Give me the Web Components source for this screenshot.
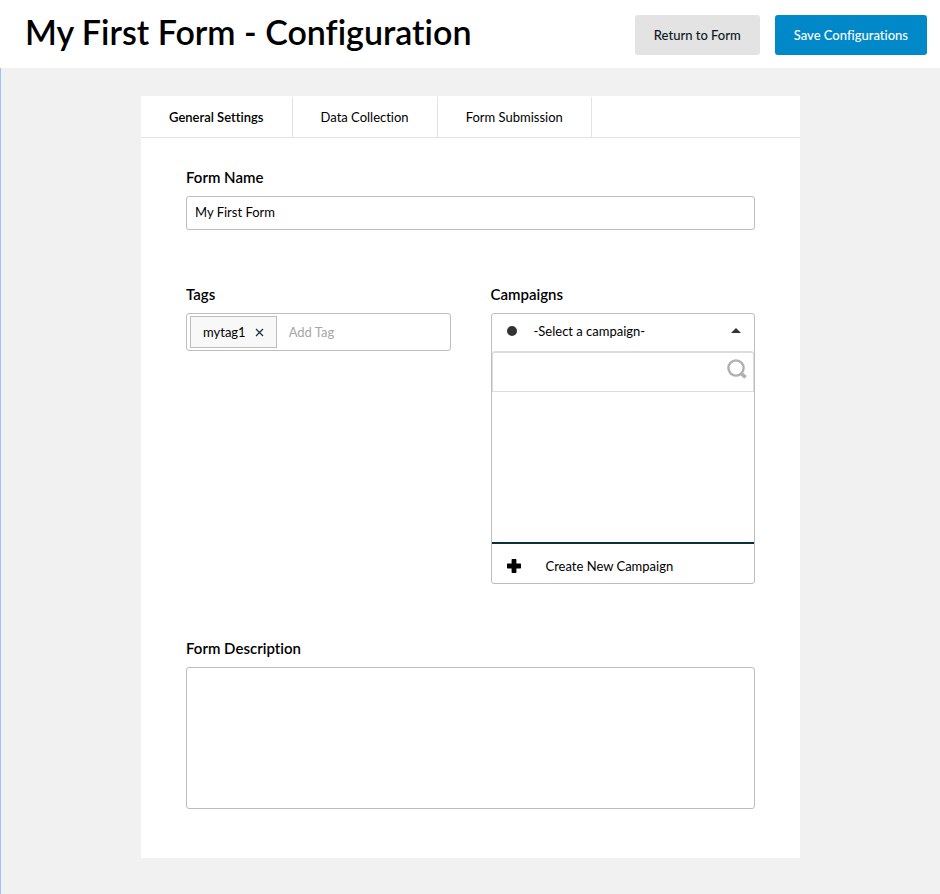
<!DOCTYPE html>
<html lang="en">
<head>
<meta charset="utf-8">
<meta name="viewport" content="width=device-width, initial-scale=1">
<title>My First Form - Configuration</title>
<style>
  html, body { margin: 0; min-height: 100vh; }
  body {
    display: flex;
    flex-direction: column;
    background: #fff;
    color: #000;
    font: 13px/20px Lato, "Open Sans", sans-serif;
    font-variant-ligatures: none;
    --line: #bdbdbd;
    --soft-line: #e3e3e3;
  }
  config-body { flex: 1; }
</style>
</head>
<body>
<config-header heading="My First Form - Configuration">
  <action-button>Return to Form</action-button>
  <action-button primary>Save Configurations</action-button>
</config-header>
<config-body>
  <config-card>
    <tab-bar slot="tabs">
      <tab-item selected>General Settings</tab-item>
      <tab-item>Data Collection</tab-item>
      <tab-item>Form Submission</tab-item>
    </tab-bar>
    <text-field label="Form Name" value="My First Form"></text-field>
    <field-row>
      <tag-field label="Tags" tag="mytag1" placeholder="Add Tag"></tag-field>
      <campaign-picker label="Campaigns"></campaign-picker>
    </field-row>
    <text-area label="Form Description"></text-area>
  </config-card>
</config-body>

<script>
const BASE = `
  *, *::before, *::after { box-sizing: border-box; }
  button, input, select, textarea { font: inherit; font-variant-ligatures: inherit; color: inherit; margin: 0; }
  .label { display: block; font-size: 15px; line-height: 20px; font-weight: 600; margin-bottom: 9px; }
`;

function define(name, styles, render) {
  customElements.define(name, class extends HTMLElement {
    constructor() {
      super();
      this.attachShadow({ mode: "open" });
    }
    connectedCallback() {
      const template = document.createElement("template");
      template.innerHTML = `<style>${BASE}${styles}</style>${render(this)}`;
      this.shadowRoot.replaceChildren(template.content.cloneNode(true));
    }
  });
}

define("config-header", `
  :host { display: block; }
  header { display: flex; align-items: start; gap: 16px; min-height: 68px; padding: 0 13px 0 25px; }
  h1 { flex: 1; margin: 0; font-size: 34px; line-height: 64px; font-weight: 600; }
  .actions { display: flex; gap: 15px; padding-top: 15px; }
`, el => `<header><h1>${el.getAttribute("heading")}</h1><div class="actions"><slot></slot></div></header>`);

define("action-button", `
  :host { display: block; }
  button { height: 40px; padding: 0 19px; border: 0; border-radius: 3px; background: #e3e3e3; font-weight: 500; color: #0b1a22; white-space: nowrap; cursor: pointer; }
  :host([primary]) button { background: #0088c9; color: #fff; }
`, () => `<button type="button"><slot></slot></button>`);

define("config-body", `
  :host { display: block; background: #f1f1f1; border-left: 1px solid #9dc0f7; padding: 28px 16px 36px; box-sizing: border-box; }
`, () => `<slot></slot>`);

define("config-card", `
  :host { display: block; max-width: 659px; margin: 0 auto; background: #fff; }
  form { display: flex; flex-direction: column; gap: 54px; padding: 29px 45px 49px; }
`, () => `<main><slot name="tabs"></slot><form><slot></slot></form></main>`);

define("tab-bar", `
  :host { display: block; border-bottom: 1px solid var(--soft-line); }
  nav { display: flex; padding-top: 1px; }
`, () => `<nav role="tablist"><slot></slot></nav>`);

define("tab-item", `
  :host { display: block; }
  button { height: 40px; padding: 0 28px; border: 0; border-right: 1px solid var(--soft-line); background: none; white-space: nowrap; cursor: pointer; }
  :host([selected]) button { font-weight: 600; }
`, el => `<button type="button" role="tab" aria-selected="${el.hasAttribute("selected")}"><slot></slot></button>`);

define("text-field", `
  :host { display: block; }
  input { display: block; width: 100%; height: 34px; padding: 0 8px 2px; border: 1px solid var(--line); border-radius: 3px; background: #fff; }
`, el => `<label class="label" for="field">${el.getAttribute("label")}</label>
  <input id="field" type="text" value="${el.getAttribute("value")}">`);

define("text-area", `
  :host { display: block; }
  textarea { display: block; width: 100%; height: 142px; padding: 8px; border: 1px solid var(--line); border-radius: 3px; background: #fff; resize: none; }
`, el => `<label class="label" for="field">${el.getAttribute("label")}</label><textarea id="field"></textarea>`);

define("field-row", `
  :host { display: grid; grid-template-columns: 1fr 1fr; gap: 40px; align-items: start; }
`, () => `<slot></slot>`);

define("tag-field", `
  :host { display: block; min-width: 0; }
  .box { display: flex; height: 38px; padding: 2px 3px; border: 1px solid var(--line); border-radius: 3px; }
  .tag { display: flex; align-items: center; gap: 9px; padding: 0 12px; border: 1px solid var(--line); background: #f8f8f8; }
  button { display: flex; padding: 0; border: 0; background: none; cursor: pointer; }
  svg { display: block; width: 9px; height: 9px; }
  input { flex: 1; min-width: 0; padding: 0 12px; border: 0; background: none; }
  input::placeholder { color: #a6a6a6; opacity: 1; }
`, el => `<label class="label" for="field">${el.getAttribute("label")}</label>
  <div class="box">
    <span class="tag"><span>${el.getAttribute("tag")}</span>
      <button type="button" aria-label="Remove tag"><svg viewBox="0 0 9 9"><path d="M1 1l7 7M8 1L1 8" stroke="#12303f" stroke-width="1.2"/></svg></button>
    </span>
    <input id="field" type="text" placeholder="${el.getAttribute("placeholder")}">
  </div>`);

define("campaign-picker", `
  :host { display: block; min-width: 0; }
  .box { border: 1px solid var(--line); border-radius: 3px; }
  .head { display: grid; grid-template-columns: 10px 1fr 10px; align-items: center; padding: 0 13px 3px 15px; height: 37px; }
  .head > * { grid-row: 1; }
  .dot { grid-column: 1; width: 10px; height: 10px; border-radius: 50%; background: #333; }
  .caret { grid-column: 3; width: 10px; height: 5px; margin-top: -2px; }
  select { grid-column: 2 / 4; width: 100%; height: 34px; padding: 0 17px; border: 0; background: none; appearance: none; }
  .search { display: flex; align-items: center; height: 41px; padding-right: 6px; border: 1px solid #dcdcdc; border-top-width: 2px; border-radius: 3px 3px 0 0; }
  .search input { flex: 1; min-width: 0; height: 36px; padding: 0 8px; border: 0; background: none; }
  .search svg { width: 20px; height: 20px; margin-top: -6px; }
  .list { list-style: none; height: 150px; margin: 0; padding: 0; }
  .create { display: flex; align-items: center; gap: 25px; width: 100%; height: 41px; padding: 5px 15px 0; border: 0; border-top: 2px solid #0c2d3c; background: none; cursor: pointer; }
  .create svg { width: 14px; height: 14px; }
`, el => `<label class="label" for="field">${el.getAttribute("label")}</label>
  <div class="box">
    <div class="head">
      <span class="dot"></span>
      <svg class="caret" viewBox="0 0 10 5"><path d="M5 0l5 5H0z" fill="#333"/></svg>
      <select id="field"><option>-Select a campaign-</option></select>
    </div>
    <div class="search">
      <input type="text" aria-label="Search campaigns">
      <svg viewBox="0 0 20 20" fill="none" stroke="#b0b0b0"><circle cx="9" cy="9" r="7.6" stroke-width="2.4"/><path d="M13.6 14l5 4.4" stroke-width="3.6"/></svg>
    </div>
    <ul class="list" aria-label="Campaign results"></ul>
    <button class="create" type="button"><svg viewBox="0 0 14 14"><path d="M5.3 0h3.4q.7 0 .7.7v3.9h3.9q.7 0 .7.7v3.4q0 .7-.7.7H9.4v3.9q0 .7-.7.7H5.3q-.7 0-.7-.7V9.4H.7Q0 9.4 0 8.7V5.3q0-.7.7-.7h3.9V.7q0-.7.7-.7z"/></svg><span>Create New Campaign</span></button>
  </div>`);
</script>
</body>
</html>
